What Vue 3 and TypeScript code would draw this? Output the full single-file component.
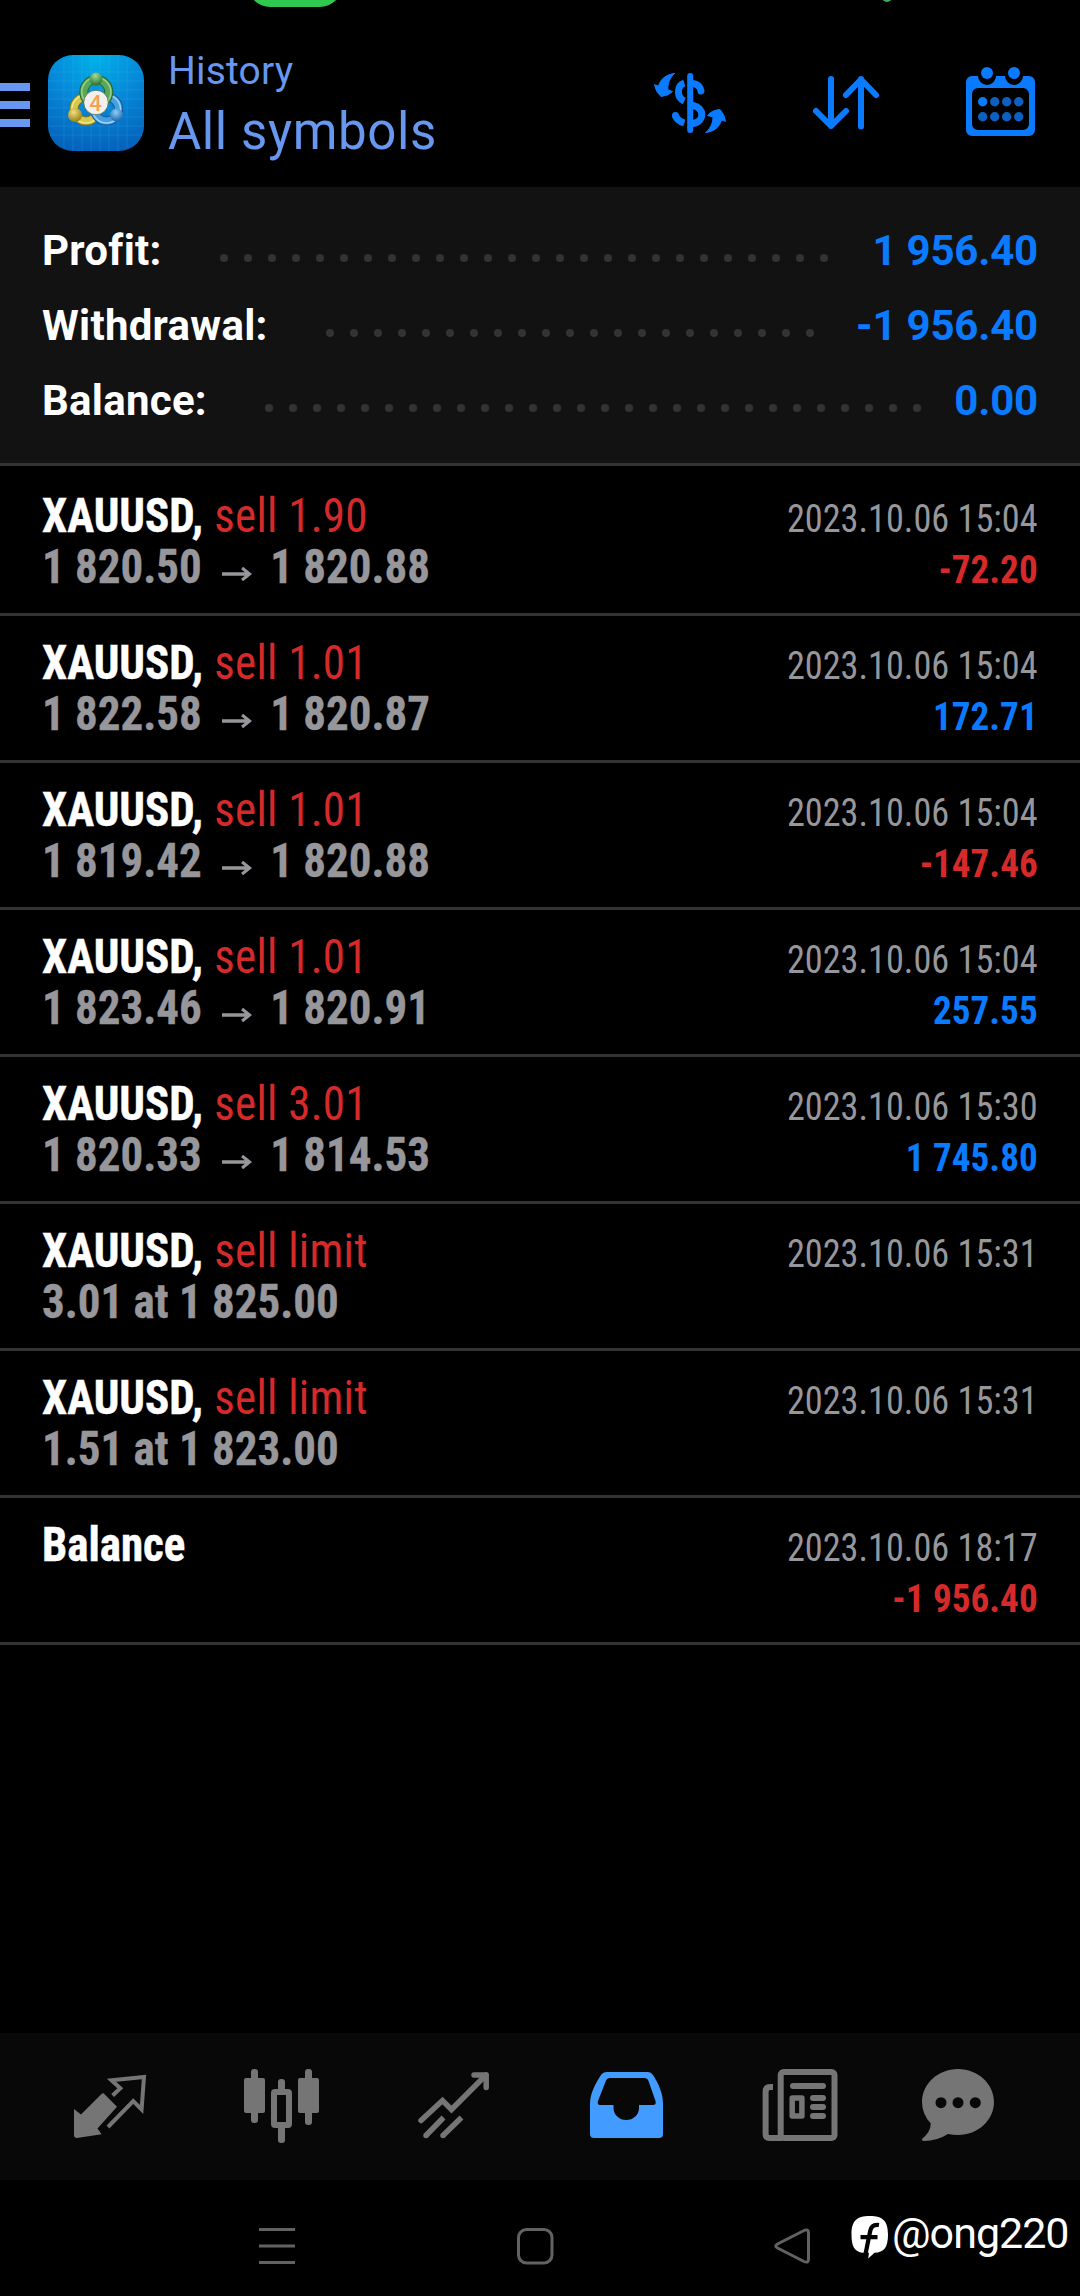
<script setup lang="ts">
interface SummaryRow { label: string; value: string; dots: number }
interface Deal {
  title: string
  action?: string
  detail?: string
  open?: string
  close?: string
  time: string
  amount?: string
}

const summary: SummaryRow[] = [
  { label: 'Profit:', value: '1 956.40', dots: 26 },
  { label: 'Withdrawal:', value: '-1 956.40', dots: 21 },
  { label: 'Balance:', value: '0.00', dots: 28 },
]

const deals: Deal[] = [
  { title: 'XAUUSD,', action: 'sell 1.90', open: '1 820.50', close: '1 820.88', time: '2023.10.06 15:04', amount: '-72.20' },
  { title: 'XAUUSD,', action: 'sell 1.01', open: '1 822.58', close: '1 820.87', time: '2023.10.06 15:04', amount: '172.71' },
  { title: 'XAUUSD,', action: 'sell 1.01', open: '1 819.42', close: '1 820.88', time: '2023.10.06 15:04', amount: '-147.46' },
  { title: 'XAUUSD,', action: 'sell 1.01', open: '1 823.46', close: '1 820.91', time: '2023.10.06 15:04', amount: '257.55' },
  { title: 'XAUUSD,', action: 'sell 3.01', open: '1 820.33', close: '1 814.53', time: '2023.10.06 15:30', amount: '1 745.80' },
  { title: 'XAUUSD,', action: 'sell limit', detail: '3.01 at 1 825.00', time: '2023.10.06 15:31' },
  { title: 'XAUUSD,', action: 'sell limit', detail: '1.51 at 1 823.00', time: '2023.10.06 15:31' },
  { title: 'Balance', time: '2023.10.06 18:17', amount: '-1 956.40' },
]

const isLoss = (amount: string): boolean => amount.startsWith('-')
</script>

<template>
  <div class="screen">
    <header class="topbar">
      <svg class="header-left" width="168" height="187" viewBox="0 0 168 187">
        <defs>
          <radialGradient id="tile" cx="50%" cy="0%" r="100%">
            <stop offset="0" stop-color="#00b2ea" />
            <stop offset=".5" stop-color="#0688d8" />
            <stop offset="1" stop-color="#0463bc" />
          </radialGradient>
          <radialGradient id="gGreen" cx="45%" cy="25%" r="75%"><stop offset="0" stop-color="#a4dc96" /><stop offset="1" stop-color="#23702f" /></radialGradient>
          <radialGradient id="gGold" cx="40%" cy="30%" r="75%"><stop offset="0" stop-color="#f0df7c" /><stop offset="1" stop-color="#94790f" /></radialGradient>
          <radialGradient id="gBlue" cx="45%" cy="30%" r="75%"><stop offset="0" stop-color="#8fcdf5" /><stop offset="1" stop-color="#1260a8" /></radialGradient>
        </defs>
        <g fill="#6797f0">
          <rect x="0" y="83" width="30" height="8" />
          <rect x="0" y="101" width="30" height="8" />
          <rect x="0" y="119" width="30" height="8" />
        </g>
        <rect x="48" y="55" width="96" height="96" rx="25" fill="url(#tile)" />
        <path d="M64 58V148M73 55V151M82 55V151M91 55V151M100 55V151M109 55V151M118 55V151M127 58V148M50 72H142M48 81H144M48 90H144M48 99H144M48 108H144M48 117H144M48 126H144M50 135H142" stroke="#5cc4f5" stroke-opacity=".16" stroke-width="1" />
        <g fill="none">
          <circle cx="86" cy="109" r="12" stroke="#7d7420" stroke-width="9" />
          <circle cx="86" cy="109" r="12" stroke="#d9c94a" stroke-width="7" />
          <circle cx="86" cy="109" r="14" stroke="#efe58c" stroke-width="1.500" />
          <circle cx="106.500" cy="109" r="12" stroke="#135a9c" stroke-width="9" />
          <circle cx="106.500" cy="109" r="12" stroke="#46a0df" stroke-width="7" />
          <circle cx="106.500" cy="109" r="14" stroke="#97d3f7" stroke-width="1.500" />
          <circle cx="96.300" cy="92" r="12.500" stroke="#256632" stroke-width="9" />
          <circle cx="96.300" cy="92" r="12.500" stroke="#58a855" stroke-width="7" />
          <circle cx="96.300" cy="92" r="14.500" stroke="#9bd18f" stroke-width="1.500" />
        </g>
        <circle cx="96" cy="79" r="6.500" fill="url(#gGreen)" />
        <circle cx="75" cy="115" r="7" fill="url(#gGold)" />
        <circle cx="116.500" cy="115" r="6.500" fill="url(#gBlue)" />
        <circle cx="96" cy="102.500" r="12.300" fill="#f2f0ee" stroke="#4a6a50" stroke-width=".8" />
        <text x="95.500" y="110.500" text-anchor="middle" font-family="Roboto, sans-serif" font-size="22" font-weight="500" fill="#f3a152">4</text>
      </svg>
      <div class="titles">
        <div class="subtitle">History</div>
        <div class="title">All symbols</div>
      </div>
      <svg width="430" height="187" viewBox="650 0 430 187" fill="none" stroke="#0a7aff" stroke-width="6" stroke-linecap="round" stroke-linejoin="round">
        <path d="M690.200 76V130" />
        <path d="M701 91C700.500 86.500 697 84 693 83.500M693 105.500C705 108 704.500 122 693 123.500" stroke-width="7" />
        <path d="M684.300 83C676.500 85.500 676.500 97.500 684.300 101M684.300 123C679.500 121.500 676.500 119 675.500 115.500" stroke-width="7" stroke-linecap="butt" />
        <circle cx="675.500" cy="115.500" r="3.500" fill="#0a7aff" stroke="none" />
        <g fill="#0a7aff" stroke="#0a7aff" stroke-width="1">
          <path d="M674.500 73.500C666 74.500 660.500 79 658.500 86L654.500 84.700Q655.500 91.500 661 96.500Q668 96 672.500 91.500L668 90C667.500 83.500 669.500 78 674.500 73.500Z" />
          <path d="M706 132.500C714.500 131.500 719.500 127 721.500 120L725.500 121.300Q724.500 114.500 720 109.500Q712 110 707.500 115.500L713 117C713 122.500 711 127.500 706 132.500Z" />
        </g>
        <path d="M831 79V126M816 111L831 126L846 111M861 126.500V79M846 95L861 79.500L876 95" />
        <path d="M972 76H978A9 9 0 0 0 996 76H1005A9 9 0 0 0 1023 76H1029A6 6 0 0 1 1035 82V130A6 6 0 0 1 1029 136H972A6 6 0 0 1 966 130V82A6 6 0 0 1 972 76ZM978 88A6 6 0 0 0 972 94V124A6 6 0 0 0 978 130H1023A6 6 0 0 0 1029 124V94A6 6 0 0 0 1023 88Z" fill="#0a7aff" stroke="none" fill-rule="evenodd" />
        <g fill="#0a7aff" stroke="none">
          <circle cx="987" cy="73" r="6" /><circle cx="1014" cy="73" r="6" />
          <circle cx="982.700" cy="101.700" r="4.700" />
        </g>
        <g fill="#0d60c0" stroke="none">
          <circle cx="994.700" cy="101.700" r="4.700" /><circle cx="1006.700" cy="101.700" r="4.700" /><circle cx="1018.700" cy="101.700" r="4.700" />
          <circle cx="982.700" cy="116.700" r="4.700" /><circle cx="994.700" cy="116.700" r="4.700" /><circle cx="1006.700" cy="116.700" r="4.700" /><circle cx="1018.700" cy="116.700" r="4.700" />
        </g>
      </svg>
      <span class="status-pill"></span>
      <span class="status-dot"></span>
    </header>

    <section class="summary">
      <div v-for="row in summary" :key="row.label" class="summary-row">
        <span class="label">{{ row.label }}</span>
        <span class="dots"><i v-for="n in row.dots" :key="n"></i></span>
        <span class="value">{{ row.value }}</span>
      </div>
    </section>

    <main class="deals">
      <article v-for="(deal, i) in deals" :key="i" class="deal">
        <div class="left">
          <div class="line"><b>{{ deal.title }}</b><span v-if="deal.action" class="loss action">{{ deal.action }}</span></div>
          <div class="line detail">
            <template v-if="deal.open">
              <span>{{ deal.open }}</span>
              <svg class="arrow" width="32" height="14" viewBox="0 0 32 14" fill="none" stroke="#97979b" stroke-width="3.300"><path d="M0 7H29M21.500 1L29.500 7L21.500 13" /></svg>
              <span>{{ deal.close }}</span>
            </template>
            <template v-else>{{ deal.detail }}</template>
          </div>
        </div>
        <div class="right">
          <div class="time">{{ deal.time }}</div>
          <div v-if="deal.amount" class="amount" :class="isLoss(deal.amount) ? 'loss' : 'gain'">{{ deal.amount }}</div>
        </div>
      </article>
    </main>

    <nav class="tabs">
      <svg viewBox="24 2033 172 147">
        <path d="M103.300 2093L117 2106.700L97.500 2128.500L101.600 2134.300L77 2138Q74 2138 74 2135V2109L81 2114.500L101.500 2094Q103.300 2092.500 105 2094.500Z" fill="#757575" />
        <path d="M112.600 2095.500L120.300 2088.300L111.500 2080.300L144 2077L141.600 2109.500L133.200 2101.200L108 2127" fill="none" stroke="#757575" stroke-width="4" />
      </svg>
      <svg viewBox="196 2033 172 147" fill="#757575">
        <rect x="244" y="2078" width="21" height="35" rx="2" /><rect x="251" y="2069" width="7" height="54" rx="3" />
        <rect x="298" y="2078" width="21" height="35" rx="2" /><rect x="305" y="2069" width="7" height="56" rx="3" />
        <rect x="278" y="2079" width="7" height="12" rx="3" /><rect x="278" y="2125" width="7" height="18" rx="3" />
        <rect x="274" y="2092" width="15" height="33" rx="1" fill="none" stroke="#757575" stroke-width="6" />
      </svg>
      <svg viewBox="368 2033 172 147" fill="none" stroke="#757575" stroke-width="5.500">
        <path d="M421 2120.500L442.500 2100.500L451.500 2109.500L486 2075" stroke-linecap="round" />
        <path d="M474 2075H486.200V2087.500" stroke-linecap="round" stroke-linejoin="round" />
        <path d="M426 2135.500L443.500 2117.500M443 2135.500L461.500 2117.500" /><path d="M426 2135.500h.01M443 2135.500h.01" stroke-linecap="round" />
      </svg>
      <svg viewBox="540 2033 172 147">
        <path fill-rule="evenodd" d="M607 2072H648Q651 2072 653 2075C659 2084 663 2094 663 2104V2134Q663 2138 659 2138H594Q590 2138 590 2134V2104C590 2094 595 2084 601 2075Q603 2072 607 2072ZM609.500 2078Q607 2078 606 2080.500L598 2101Q597 2105 600 2105H613.500V2108A12.700 12 0 0 0 639 2108V2105H653Q656.500 2105 655.500 2101L648.500 2081Q647.500 2078 644.500 2078Z" fill="#429bff" />
      </svg>
      <svg viewBox="712 2033 172 147" fill="#757575">
        <rect x="780.700" y="2072" width="53.800" height="66" rx="3" fill="none" stroke="#757575" stroke-width="6" />
        <path d="M773 2087H770Q765.600 2087 765.600 2092V2134Q765.600 2138 769.500 2138H782" fill="none" stroke="#757575" stroke-width="6" />
        <rect x="790" y="2083" width="36" height="6" rx="3" />
        <rect x="792.200" y="2098" width="9.700" height="18" fill="none" stroke="#757575" stroke-width="5.500" stroke-linejoin="round" />
        <rect x="810" y="2095" width="16" height="6" rx="3" /><rect x="810" y="2104" width="16" height="6" rx="3" /><rect x="810" y="2113" width="16" height="6" rx="3" />
      </svg>
      <svg viewBox="884 2033 172 147">
        <path d="M958 2069C978 2069 994 2084 994 2102S978 2135 958 2135Q953 2135 948 2134Q937 2141 924 2141Q921 2140.500 922.500 2138.500Q930.500 2132 930.800 2123.500Q922 2114 922 2102C922 2084 938 2069 958 2069Z" fill="#757575" />
        <g fill="#080808"><circle cx="941" cy="2102.700" r="5.500" /><circle cx="958" cy="2102.700" r="5.500" /><circle cx="975.300" cy="2102.700" r="5.500" /></g>
      </svg>
    </nav>

    <footer class="sysnav">
      <svg width="1080" height="116" viewBox="0 2180 1080 116" fill="none" stroke="#626262" stroke-width="3">
        <path d="M259 2229.500H295M259 2246H295M259 2262.500H295" />
        <rect x="518.500" y="2229.500" width="33.500" height="33.500" rx="8" />
        <path d="M777.500 2244L804 2230.500Q808.500 2228.500 808.500 2233V2259Q808.500 2263.500 804 2261.500L777.500 2248Q774 2246 777.500 2244Z" />
      </svg>
      <div class="watermark">
        <svg width="37" height="43" viewBox="851 2216 37 43">
          <path d="M869.700 2216C883 2216 888 2221 888 2234.500C888 2247.500 884 2252.500 874.500 2252.700L868.200 2258.500L869 2252.800H862C854 2251 851.500 2246 851.500 2234.500C851.500 2221 856.500 2216 869.700 2216Z" fill="#fff" />
          <path d="M879 2225Q871.500 2224 870.200 2231L865.300 2255M860.500 2237.200H877.500" fill="none" stroke="#000" stroke-width="4.200" />
        </svg>
        <span>@ong220</span>
      </div>
    </footer>
  </div>
</template>

<style>
body { background: #000; }
</style>

<style scoped>
.screen {
  width: 1080px;
  height: 2296px;
  display: flex;
  flex-direction: column;
  overflow: hidden;
  background: #000;
  font-family: Roboto, "Liberation Sans", sans-serif;
}
.topbar {
  position: relative;
  height: 187px;
  display: flex;
  flex: none;
}
.titles { flex: 1; padding-top: 47px; white-space: nowrap; color: #6797ee; }
.subtitle { font-size: 39px; line-height: 48px; letter-spacing: .2px; }
.title { font-size: 51px; line-height: 60px; margin-top: 7px; letter-spacing: .6px; }
.status-pill { position: absolute; left: 247px; top: -40px; width: 96px; height: 47px; border-radius: 24px; background: #30c950; }
.status-dot { position: absolute; left: 882px; top: -8px; width: 10px; height: 10px; border-radius: 50%; background: #3fae62; }
.summary {
  box-sizing: border-box;
  flex: none;
  height: 279px;
  padding: 26px 42px 0;
  background: #121212;
  border-bottom: 3px solid #333;
}
.summary-row { display: flex; align-items: center; height: 75px; font-size: 42px; font-weight: 700; color: #fff; }
.label { letter-spacing: .27px; }
.value { margin-left: auto; color: #0a7aff; letter-spacing: -.2px; }
.dots { display: flex; gap: 16px; margin: 15px 0 0 58px; }
.dots i { width: 8px; height: 8px; border-radius: 50%; background: #333; }
.deals { flex: 1; padding-top: 3px; }
.deal {
  box-sizing: border-box;
  height: 147px;
  padding: 21px 42px 0;
  display: flex;
  justify-content: space-between;
  border-bottom: 3px solid #333;
  font-family: "Roboto Condensed", Roboto, sans-serif;
  font-stretch: 75%;
  white-space: nowrap;
}
.left { transform: scaleX(.937); transform-origin: 0 0; }
.line { display: flex; height: 51px; line-height: 51px; font-size: 48px; color: #fff; }
.line b { -webkit-text-stroke: .5px #fff; }
.action { margin-left: 12px; letter-spacing: .3px; }
.detail { font-weight: 700; color: #97979b; -webkit-text-stroke: .4px #97979b; }
.arrow { margin: 26px 20px 0 21px; }
.right { text-align: right; font-size: 39px; line-height: 51px; padding-top: 4px; }
.time { color: #97979b; transform: scaleX(.93); transform-origin: 100% 0; }
.amount { font-weight: 700; transform: scaleX(.952); transform-origin: 100% 0; }
.loss { color: #d62a2a; }
.gain { color: #0a7aff; }
.tabs { flex: none; display: flex; height: 147px; padding: 0 24px; background: #080808; }
.tabs svg { width: 172px; height: 147px; }
.sysnav { position: relative; flex: none; height: 116px; }
.watermark { position: absolute; left: 851px; top: 36px; display: flex; align-items: flex-start; color: #fff; font: 400 43px/43px Roboto, sans-serif; letter-spacing: -1px; }
.watermark span { margin: -4px 0 0 4px; white-space: nowrap; }
</style>
